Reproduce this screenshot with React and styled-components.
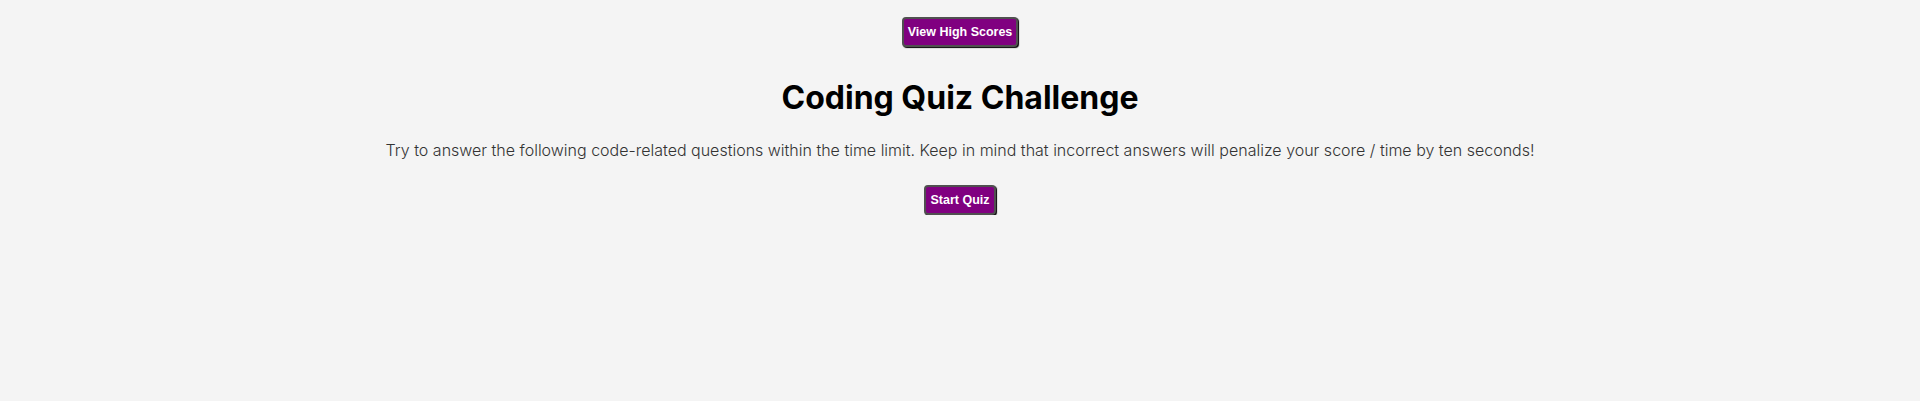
import React from "react";
import styled, { createGlobalStyle } from "styled-components";

const Global = createGlobalStyle`
  html, body { margin: 0; padding: 0; background: #f4f4f4; }
  body { font-family: Inter, "Liberation Sans", sans-serif; }
`;

const Page = styled.main`
  display: flex;
  flex-direction: column;
  align-items: center;
  padding-top: 17px;
`;

const Button = styled.button`
  background: #800080;
  color: #fff;
  font-family: "Liberation Sans", Arial, sans-serif;
  font-size: 12.5px;
  font-weight: 700;
  line-height: 16px;
  padding: 5px 4px;
  border: 2px solid #505050;
  border-radius: 4px;
  box-shadow: 1px 1px 1px #000;
  cursor: pointer;
`;

const Title = styled.h1`
  margin: 31px 0 0;
  font-family: Inter, sans-serif;
  font-size: 32px;
  font-weight: 700;
  line-height: 40px;
  color: #000;
`;

const Intro = styled.p`
  margin: 20px 0 23px;
  font-family: Inter, sans-serif;
  font-size: 16px;
  font-weight: 300;
  line-height: 24px;
  color: #333;
`;

export default function App() {
  return (
    <>
      <Global />
      <Page>
        <Button>View High Scores</Button>
        <Title>Coding Quiz Challenge</Title>
        <Intro>
          Try to answer the following code-related questions within the time limit. Keep in mind that incorrect answers will penalize your score / time by ten seconds!
        </Intro>
        <Button>Start Quiz</Button>
      </Page>
    </>
  );
}
